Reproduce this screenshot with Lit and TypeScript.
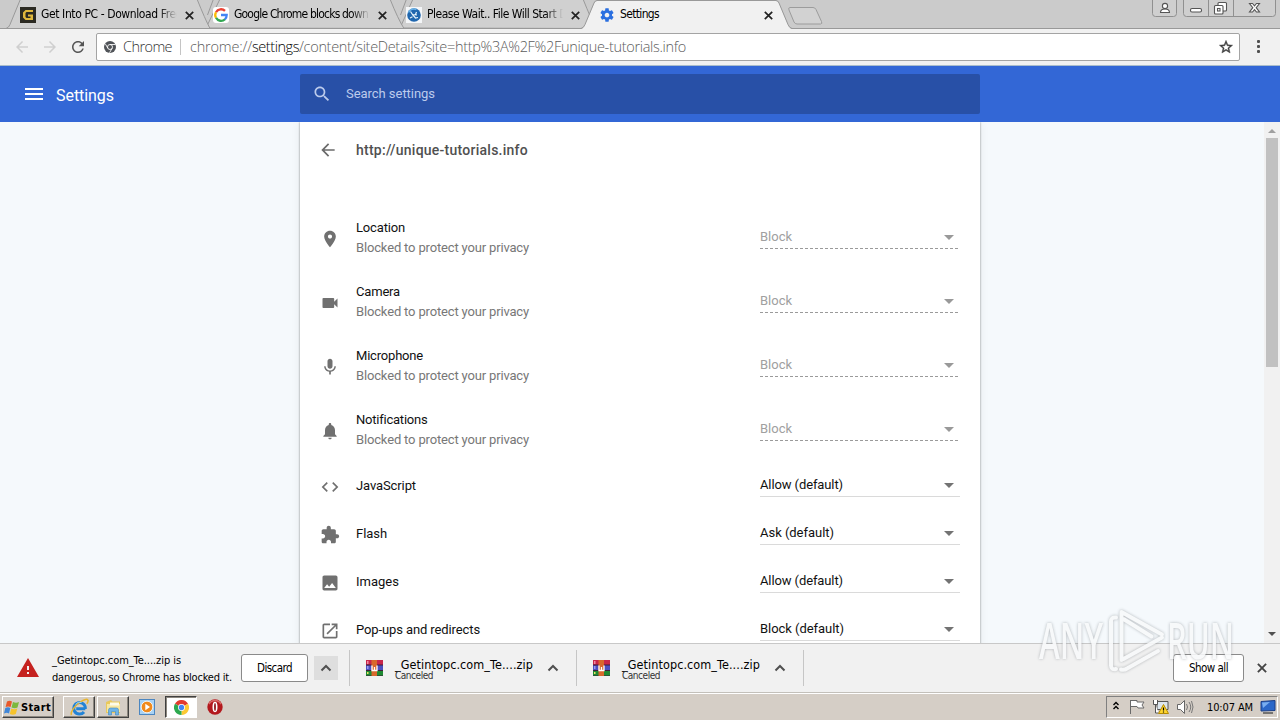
import { LitElement, html, svg, css, nothing } from "lit";
import { customElement, property } from "lit/decorators.js";

/* Single-line label whose tracking is adjusted so that it occupies a given width. */
@customElement("fit-text")
class FitText extends LitElement {
  @property({ type: Number }) w = 0;
  static styles = css`
    :host { display: inline-block; white-space: pre; flex: none; }
  `;
  render() {
    return html`<slot></slot>`;
  }
  firstUpdated() {
    const n = (this.textContent || "").length;
    const natural = this.getBoundingClientRect().width;
    if (this.w && n > 1) this.style.letterSpacing = `${(this.w - natural) / n}px`;
  }
}

const ICONS: Record<string, string> = {
  location: "M12 2C8.13 2 5 5.13 5 9c0 5.25 7 13 7 13s7-7.75 7-13c0-3.87-3.13-7-7-7zm0 9.5c-1.38 0-2.5-1.12-2.5-2.5s1.12-2.5 2.5-2.5 2.5 1.12 2.5 2.5-1.12 2.5-2.5 2.5z",
  camera: "M17 10.5V7c0-.55-.45-1-1-1H4c-.55 0-1 .45-1 1v10c0 .55.45 1 1 1h12c.55 0 1-.45 1-1v-3.500l4 4v-11l-4 4z",
  mic: "M12 14c1.660 0 2.990-1.340 2.990-3L15 5c0-1.660-1.340-3-3-3S9 3.340 9 5v6c0 1.660 1.340 3 3 3zm5.300-3c0 3-2.540 5.100-5.300 5.100S6.700 14 6.700 11H5c0 3.410 2.720 6.230 6 6.720V21h2v-3.280c3.280-.48 6-3.300 6-6.720h-1.700z",
  bell: "M12 22c1.100 0 2-.9 2-2h-4c0 1.100.89 2 2 2zm6-6v-5c0-3.070-1.640-5.640-4.500-6.320V4c0-.83-.67-1.500-1.500-1.500s-1.500.67-1.500 1.500v.68C7.630 5.360 6 7.920 6 11v5l-2 2v1h16v-1l-2-2z",
  code: "M9.400 16.600L4.800 12l4.600-4.600L8 6l-6 6 6 6 1.400-1.400zm5.200 0l4.600-4.600-4.600-4.600L16 6l6 6-6 6-1.400-1.400z",
  puzzle: "M20.500 11H19V7c0-1.100-.9-2-2-2h-4V3.500C13 2.120 11.880 1 10.500 1S8 2.120 8 3.500V5H4c-1.100 0-1.990.9-1.990 2v3.800H3.500c1.490 0 2.700 1.210 2.700 2.700s-1.210 2.700-2.700 2.700H2V20c0 1.100.9 2 2 2h3.800v-1.500c0-1.490 1.210-2.700 2.700-2.700 1.490 0 2.700 1.210 2.700 2.700V22H17c1.100 0 2-.9 2-2v-4h1.500c1.380 0 2.500-1.120 2.500-2.500S21.880 11 20.500 11z",
  image: "M21 19V5c0-1.100-.9-2-2-2H5c-1.100 0-2 .9-2 2v14c0 1.100.9 2 2 2h14c1.100 0 2-.9 2-2zM8.500 13.500l2.500 3.010L14.500 12l4.500 6H5l3.500-4.500z",
  popup: "M19 19H5V5h7V3H5c-1.110 0-2 .9-2 2v14c0 1.100.89 2 2 2h14c1.100 0 2-.9 2-2v-7h-2v7zM14 3v2h3.590l-9.830 9.830 1.410 1.410L19 6.410V10h2V3h-7z",
  back: "M20 11H7.830l5.590-5.590L12 4l-8 8 8 8 1.410-1.410L7.830 13H20v-2z",
  search: "M15.500 14h-.79l-.28-.27C15.410 12.590 16 11.110 16 9.500 16 5.910 13.090 3 9.500 3S3 5.910 3 9.500 5.910 16 9.500 16c1.610 0 3.090-.59 4.230-1.570l.27.28v.79l5 4.990L20.490 19l-4.990-5zm-6 0C7.010 14 5 11.990 5 9.500S7.010 5 9.500 5 14 7.010 14 9.500 11.990 14 9.500 14z",
  menu: "M3 18h18v-2H3v2zm0-5h18v-2H3v2zm0-7v2h18V6H3z",
  reload: "M17.650 6.350C16.200 4.900 14.210 4 12 4c-4.420 0-7.990 3.580-7.990 8s3.570 8 7.990 8c3.730 0 6.840-2.550 7.730-6h-2.080c-.82 2.330-3.040 4-5.650 4-3.310 0-6-2.690-6-6s2.690-6 6-6c1.660 0 3.140.69 4.220 1.780L13 11h7V4l-2.350 2.350z",
  star: "M22 9.240l-7.190-.62L12 2 9.190 8.630 2 9.240l5.460 4.730L5.820 21 12 17.270 18.180 21l-1.630-7.030L22 9.240zM12 15.400l-3.760 2.270 1-4.280-3.320-2.880 4.380-.38L12 6.100l1.710 4.040 4.380.38-3.320 2.880 1 4.280L12 15.400z",
  warning: "M1 21h22L12 2 1 21zm12-3h-2v-2h2v2zm0-4h-2v-4h2v4z",
  gear: "M19.430 12.980c.04-.32.07-.64.07-.98s-.03-.66-.07-.98l2.110-1.650c.19-.15.24-.42.12-.64l-2-3.460c-.12-.22-.39-.3-.61-.22l-2.490 1c-.52-.4-1.080-.73-1.690-.98l-.38-2.650C14.460 2.180 14.250 2 14 2h-4c-.25 0-.46.18-.49.42l-.38 2.650c-.61.25-1.170.59-1.690.98l-2.490-1c-.23-.09-.49 0-.61.22l-2 3.460c-.13.22-.07.49.12.64l2.110 1.650c-.04.32-.07.65-.07.98s.03.66.07.98l-2.110 1.650c-.19.15-.24.42-.12.64l2 3.460c.12.22.39.3.61.22l2.490-1c.52.4 1.080.73 1.690.98l.38 2.650c.03.24.24.42.49.42h4c.25 0 .46-.18.49-.42l.38-2.650c.61-.25 1.170-.59 1.690-.98l2.490 1c.23.09.49 0 .61-.22l2-3.460c.12-.22.07-.49-.12-.64l-2.110-1.650zM12 15.500c-1.930 0-3.500-1.570-3.500-3.500s1.570-3.500 3.500-3.500 3.500 1.570 3.500 3.500-1.570 3.500-3.500 3.500z",
};

const icon = (name: string, size = 20, cls = "") =>
  html`<svg class="ic ${cls}" width=${size} height=${size} viewBox="0 0 24 24"><path d=${ICONS[name]} fill="currentColor" /></svg>`;

const chevronUp = html`<svg class="ic" width="12" height="8" viewBox="0 0 12 8"><path d="M1.500 6.500 6 2l4.500 4.500" fill="none" stroke="#505050" stroke-width="2" /></svg>`;
const cross = (size = 9, color = "#222") =>
  html`<svg class="ic" width=${size} height=${size} viewBox="0 0 9 9"><path d="M.8.8l7.400 7.400M8.200.8L.8 8.200" stroke=${color} stroke-width="1.700" /></svg>`;

const chromeBall = (size: number) => html`<svg class="ic" width=${size} height=${size} viewBox="0 0 48 48">
  <path d="M24 24 3.200 12A24 24 0 0 1 44.800 12z" fill="#e33b2e" />
  <path d="M24 24 44.800 12A24 24 0 0 1 24 48z" fill="#fcc934" />
  <path d="M24 24 24 48A24 24 0 0 1 3.200 12z" fill="#2da94f" />
  <circle cx="24" cy="24" r="11" fill="#fff" /><circle cx="24" cy="24" r="8.500" fill="#4285f4" />
</svg>`;

const chromeMono = html`<svg class="ic" width="12" height="12" viewBox="0 0 48 48">
  <circle cx="24" cy="24" r="24" fill="#505358" />
  <circle cx="24" cy="24" r="10" fill="none" stroke="#fff" stroke-width="3.500" />
  <path d="M24 14h22M15.500 29 5 11M32.500 29 22 47" stroke="#fff" stroke-width="3.500" />
</svg>`;

const favG = html`<svg class="ic" width="16" height="16" viewBox="0 0 16 16">
  <rect width="16" height="16" fill="#2b2a22" />
  <path d="M13 5V3H5.500L3 5.500v5L5.500 13H13V7.500H8v2h2.500V11H6.500L5.500 10V6l1-1z" fill="#e0b83c" />
</svg>`;

const favGoogle = html`<svg class="ic" width="16" height="16" viewBox="0 0 16 16">
  <rect width="16" height="16" rx="3" fill="#fff" />
  <g fill="none" stroke-width="2.300">
    <path d="M3 5.200A5.700 5.700 0 0 1 12 3.900" stroke="#ea4335" />
    <path d="M3 10.800A5.700 5.700 0 0 1 3 5.200" stroke="#fbbc05" />
    <path d="M12 12.200A5.700 5.700 0 0 1 3 10.800" stroke="#34a853" />
    <path d="M8 8h5.700a5.700 5.700 0 0 1-1.900 4.300" stroke="#4285f4" />
  </g>
</svg>`;

const favBlue = html`<svg class="ic" width="16" height="16" viewBox="0 0 16 16">
  <rect width="16" height="16" fill="#f4f6f8" />
  <circle cx="8" cy="8" r="6.800" fill="#1f66ae" />
  <path d="M2.500 5.500a6 6 0 0 1 8-3" stroke="#6bb2e6" stroke-width="1.500" fill="none" />
  <path d="M4.500 4.500l2 3 4.500.5M6.500 7.500l3 3.500 2.500-.5M4 11l2.500-1.200M10.500 5l-1 2.500" stroke="#e8f4fc" stroke-width="1.200" fill="none" />
</svg>`;

const rarIcon = html`<svg class="ic" width="17" height="16" viewBox="0 0 17 16">
  <rect width="17" height="16" fill="#3c1f3a" />
  <rect y="0" width="17" height="4.500" fill="#c8264a" /><rect y="5.500" width="17" height="4.500" fill="#4b4fc0" /><rect y="11" width="17" height="4.500" fill="#1f8a32" />
  <rect x="1" y="1" width="1.500" height="3" fill="#f08aa0" /><rect x="1" y="6" width="1.500" height="3" fill="#9a9cf0" /><rect x="1" y="12" width="1.500" height="2" fill="#e8e060" />
  <rect x="5.500" width="5.500" height="16" fill="#d8682c" />
  <path d="M6 5.500v5h5v-5M8.500 7v3.500" stroke="#fff" stroke-width="1.300" fill="none" />
</svg>`;

const winFlag = html`<svg class="ic" width="16" height="15" viewBox="0 0 16 15">
  <path d="M3 1.500C5 .3 6.500.6 8 1.500L6.600 7C5 6.200 3.500 6.200 1.600 7z" fill="#e8582a" />
  <path d="M9 2c2 1 4 1 6 0l-1.500 5.500c-2 1-4 .8-6 0z" fill="#7cb83c" />
  <path d="M1.300 8c2-1 3.600-.8 5 0L5 13.500C3.500 12.600 2 12.600 0 13.500z" fill="#3f86d8" />
  <path d="M7.300 8.500c2 .9 4 .9 6 0L11.800 14c-2 1-4 .8-6 0z" fill="#f6c32c" />
</svg>`;

const ieIcon = html`<svg class="ic" width="19" height="18" viewBox="0 0 19 18">
  <path d="M15.300 10.800H6.200M15.300 10.800A5.800 5.800 0 1 0 14 14" fill="none" stroke="#2383d6" stroke-width="3" />
  <path d="M1.500 17c-1.500-2.500 3-9 8-12.500S17.800.5 18 2.500c.2 1-.6 2.400-1.200 3.200" fill="none" stroke="#e8b530" stroke-width="1.500" />
  <path d="M5.500 6.500a5 5 0 0 1 6-2" stroke="#8fd0f8" stroke-width="1" fill="none" />
</svg>`;

const folderIcon = html`<svg class="ic" width="17" height="17" viewBox="0 0 17 17">
  <path d="M1 3l5-2 1.500 1.500H15V14H1z" fill="#e9c95c" />
  <path d="M2 5h13v8H2z" fill="#f7e7a2" /><path d="M5 3.500h9v3H5z" fill="#fdfbe8" />
  <path d="M3.500 16v-5q0-2 2-2h6q2 0 2 2v5h-3v-3.500h-4V16z" fill="#6db4e8" stroke="#3f86bd" stroke-width=".6" />
</svg>`;

const mediaIcon = html`<svg class="ic" width="16" height="16" viewBox="0 0 16 16">
  <rect x=".5" y=".5" width="15" height="15" fill="#a8d2f4" stroke="#4c86c0" />
  <circle cx="8" cy="8" r="5.800" fill="#f08a1c" stroke="#fff" stroke-width=".8" /><path d="M6.300 4.800v6.400L11 8z" fill="#fff" />
</svg>`;

const operaIcon = html`<svg class="ic" width="16" height="16" viewBox="0 0 16 16">
  <circle cx="8" cy="8" r="7.700" fill="#b3181d" /><path d="M2 5a7 7 0 0 1 12 0" stroke="#d86a68" stroke-width="1.500" fill="none" />
  <ellipse cx="8" cy="8" rx="2.500" ry="5.200" fill="#fff" /><ellipse cx="8" cy="8" rx=".9" ry="3.900" fill="#8c1418" />
</svg>`;

const TABS = [
  { icon: favG, text: "Get Into PC - Download Free", w: 141 },
  { icon: favGoogle, text: "Google Chrome blocks down", w: 134 },
  { icon: favBlue, text: "Please Wait.. File Will Start D", w: 140 },
];

const ROWS = [
  { icon: "location", name: "Location", w: 49, blocked: true, value: "Block", vw: 32 },
  { icon: "camera", name: "Camera", w: 44, blocked: true, value: "Block", vw: 32 },
  { icon: "mic", name: "Microphone", w: 67, blocked: true, value: "Block", vw: 32 },
  { icon: "bell", name: "Notifications", w: 71, blocked: true, value: "Block", vw: 32 },
  { icon: "code", name: "JavaScript", w: 60, blocked: false, value: "Allow (default)", vw: 83 },
  { icon: "puzzle", name: "Flash", w: 31, blocked: false, value: "Ask (default)", vw: 74 },
  { icon: "image", name: "Images", w: 43, blocked: false, value: "Allow (default)", vw: 83 },
  { icon: "popup", name: "Pop-ups and redirects", w: 124, blocked: false, value: "Block (default)", vw: 84 },
];

@customElement("app-root")
class AppRoot extends LitElement {
  static styles = css`
    :host {
      display: block; position: relative; width: 1280px; height: 720px; overflow: hidden;
      font-family: "DejaVu Sans Condensed", "DejaVu Sans", sans-serif; font-size: 11px; color: #000;
    }
    * { box-sizing: border-box; }
    .ic { display: block; flex: none; }
    .screen { display: flex; flex-direction: column; height: 720px; }

    .strip { position: relative; height: 29px; flex: none; background: #cbcbcb; }
    .outline { position: absolute; inset: 0; }
    .tabs { position: relative; display: flex; height: 29px; padding-left: 20px; }
    .tab { display: flex; align-items: center; width: 193px; height: 29px; }
    .label { width: 136px; margin-left: 5px; overflow: hidden; font-size: 12px; line-height: 16px; margin-top: -1px; }
    .fade { -webkit-mask-image: linear-gradient(90deg, #000 118px, transparent 136px); }
    .gear { color: #2a6fe0; }
    .tab .close { margin-left: 8px; padding-top: 1px; }
    .controls { position: absolute; right: 0; top: 0; }

    .toolbar { display: flex; align-items: center; height: 37px; flex: none; background: #f1f1f1; border-bottom: 1px solid #a9bdcc; padding: 0 0 1px 13px; }
    .nav { color: #cfcfcf; margin-right: 10px; }
    .fwd { transform: scaleX(-1); }
    .reload { color: #555; margin-right: 9px; }
    .omni { display: flex; align-items: center; width: 1144px; height: 28px; background: #fff; border: 1px solid #a4a4a4; border-radius: 2px; padding: 0 5px 0 7px; font: 300 14.500px/20px "Open Sans", sans-serif; color: #5c5c5c; }
    .chip { margin-left: 7px; color: #333; }
    .sep { width: 1px; height: 16px; background: #c4c4c4; margin: 0 9px 0 8px; }
    .url { flex: 1; display: flex; }
    .dark { color: #000; }
    .star { color: #3c3c3c; stroke: #3c3c3c; stroke-width: .6px; }
    .dots { display: flex; flex-direction: column; gap: 2px; margin-left: 17px; }
    .dot { width: 3px; height: 3px; background: #505050; border-radius: 1px; }

    .header { display: flex; align-items: center; height: 56px; flex: none; background: #3367d6; color: #fff; padding-left: 22px; }
    .title { font: 400 16px/20px Roboto, sans-serif; margin-left: 10px; width: 244px; padding-top: 3px; }
    .search { display: flex; align-items: center; width: 680px; height: 40px; background: #2850a7; border-radius: 2px; padding-left: 12px; color: #bccbec; font: 400 13px/18px Roboto, sans-serif; }
    .search fit-text { margin-left: 14px; }

    .content { display: flex; height: 521px; flex: none; background: #f5f9fc; overflow: hidden; padding-left: 300px; }
    .panel { width: 680px; height: 700px; background: #fff; font: 400 13px/20px Roboto, sans-serif; box-shadow: 0 0 2px rgba(0,0,0,.45), 0 1px 10px rgba(0,0,0,.07); flex: none; }
    .site { display: flex; align-items: center; height: 84px; padding: 0 20px 28px 18px; font-weight: 500; font-size: 14px; color: #505050; }
    .site .ic { color: #6b6b6b; margin-right: 18px; }
    .row { display: flex; align-items: center; height: 48px; padding: 0 20px; color: #111; }
    .tall { height: 64px; }
    .row .ic.lead { color: #707070; margin: 2px 16px 0 0; }
    .names { flex: 1; display: flex; flex-direction: column; align-items: flex-start; }
    .sub { color: #777; }
    .select { display: flex; align-items: center; justify-content: space-between; width: 200px; height: 23px; border-bottom: 1px solid #dadada; padding-right: 6px; color: #111; margin-top: -1px; }
    .off { border-bottom: 0; padding-bottom: 1px; color: #a0a0a0; background: repeating-linear-gradient(90deg, #9a9a9a 0 3px, transparent 3px 5px) 0 100% / 100% 1px no-repeat; }
    .arrow { width: 10px; height: 5px; background: #737373; clip-path: polygon(0 0, 100% 0, 50% 100%); margin-top: 1px; }
    .off .arrow { background: #999; }

    .scroll { display: flex; flex-direction: column; align-items: center; margin-left: auto; width: 16px; height: 521px; background: #f1f1f1; }
    .up { width: 8px; height: 4px; margin-top: 7px; background: #a0a0a0; clip-path: polygon(50% 0, 100% 100%, 0 100%); }
    .thumb { width: 12px; height: 229px; margin-top: 5px; background: #c1c1c1; }
    .down { width: 8px; height: 4px; margin: auto 0 7px; background: #505050; clip-path: polygon(0 0, 100% 0, 50% 100%); }

    .shelf { display: flex; align-items: center; height: 50px; flex: none; background: #f1f1f1; border-top: 1px solid #c8c8c8; border-bottom: 1px solid #c3c0ba; padding: 0 13px 0 16px; }
    .danger { color: #c5221f; }
    .msg { display: flex; flex-direction: column; align-items: flex-start; margin-left: 12px; width: 189px; font-size: 11px; line-height: 17px; padding-top: 1px; }
    .btn { display: flex; align-items: center; justify-content: center; height: 28px; background: #fff; border: 1px solid #8a8a8a; border-radius: 3px; font-size: 11.500px; line-height: 16px; padding-bottom: 1px; }
    .discard { width: 67px; }
    .drop { display: flex; align-items: center; justify-content: center; width: 24px; height: 24px; background: #dedede; margin: 0 11px 0 6px; }
    .bar { width: 1px; height: 36px; background: #c6c6c6; }
    .item { display: flex; align-items: center; width: 226px; padding-left: 16px; }
    .item .ic { margin-top: -1px; }
    .file { display: flex; flex-direction: column; align-items: flex-start; width: 138px; margin: 0 14px 0 12px; font-size: 12.500px; line-height: 14px; padding-top: 2px; }
    .state { font-size: 10px; line-height: 9px; color: #333; margin-top: -1px; }
    .all { width: 71px; margin-left: auto; margin-right: 13px; }

    .taskbar { display: flex; align-items: center; height: 27px; flex: none; background: #d5cec6; border-top: 1px solid #fff; padding: 0 2px; }
    .b { display: flex; align-items: center; justify-content: center; height: 22px; border: 1px solid; border-color: #fff #404040 #404040 #fff; box-shadow: inset -1px -1px #8c877f; }
    .start { width: 52px; justify-content: flex-start; padding-left: 1px; font-weight: 700; margin-right: 9px; }
    .start fit-text { margin-left: 1px; }
    .app { width: 32px; margin-right: 2px; }
    .active { background: #fff; border-color: #404040 #fff #fff #404040; box-shadow: inset 1px 1px #8c877f; margin: 0 10px 0 10px; }
    .media { margin-left: 8px; }
    .tray { display: flex; align-items: center; width: 172px; height: 22px; margin-left: auto; border: 1px solid; border-color: #808080 #fff #fff #808080; padding-left: 5px; }
    .clock { margin-left: 5px; }

    .mark { position: absolute; left: 1030px; top: 600px; opacity: .9; filter: drop-shadow(0 0 1.500px rgba(110,115,120,.55)); }
    .word { font: 600 50px "Open Sans", sans-serif; }
  `;

  outline() {
    return svg`
      <g stroke="#999" fill="#d0d0d0">
        <path d="M400 28 413 -1H583q8 20 13 29.500z" />
        <path d="M206 28 220 -1H390q8 20 14 29.500z" />
        <path d="M6 28.500q3-1 4-4L20.500-1H197q8 20 13 29.500z" />
      </g>
      <path d="M213.500-1 207.500 15M406.500-1 400.500 15" stroke="#999" fill="none" />
      <path d="M0 28.500H1280" stroke="#999" />
      <path d="M581 29q3-1 4-4L594 3.500Q595 1 597 1H776q2 0 3 2.500L788 25q1 3 4 4z" fill="#f1f1f1" />
      <path d="M581 28.500q3-1 4-4L594 3Q595 .5 597 .5H776q2 0 3 2.500L788 24.500q1 3 4 4" fill="none" stroke="#999" />
      <path d="M790 7.500h23q2 0 3 2l5.500 12q1 2.500-1 2.500H797q-2 0-3-2l-5-12q-1-2.500 1-2.500z" fill="#d2d2d2" stroke="#9c9c9c" />`;
  }

  controls() {
    return html`<svg class="controls" width="130" height="20" viewBox="1150 0 130 20">
      <g fill="#cfcfcf" stroke="#909090">
        <path d="M1152.500-2V13.500q0 3 3 3h18q3 0 3-3V-2z" />
        <path d="M1183.500-2V13.500q0 3 3 3h86q3 0 3-3V-2z" />
        <path d="M1208.500 0V16M1233.500 0V16" />
      </g>
      <g fill="#fff" stroke="#555" stroke-width="1.100">
        <path d="M1160.500 12.500q0-3.500 4.500-3.500t4.500 3.500z" /><circle cx="1165" cy="6" r="2.600" />
        <rect x="1190.500" y="8.500" width="11" height="3.500" rx="1.500" />
        <rect x="1218" y="2.500" width="8.500" height="8.500" rx="1" /><rect x="1214.500" y="5.500" width="8.500" height="8.500" rx="1" /><rect x="1217.500" y="8.500" width="2.500" height="2.500" />
        <path d="M1249.500 3.500h3l2 2.300 2-2.300h3l-3.300 4.200 3.300 4.300h-3l-2-2.300-2 2.300h-3l3.300-4.300z" />
      </g>
    </svg>`;
  }

  row(r: (typeof ROWS)[number]) {
    return html`<div class="row ${r.blocked ? "tall" : ""}">
      ${icon(r.icon, 20, "lead")}
      <div class="names">
        <fit-text .w=${r.w}>${r.name}</fit-text>
        ${r.blocked ? html`<fit-text class="sub" .w=${173}>Blocked to protect your privacy</fit-text>` : nothing}
      </div>
      <div class="select ${r.blocked ? "off" : ""}"><fit-text .w=${r.vw}>${r.value}</fit-text><span class="arrow"></span></div>
    </div>`;
  }

  item() {
    return html`<div class="item">
        ${rarIcon}
        <div class="file"><fit-text .w=${138}>_Getintopc.com_Te....zip</fit-text><fit-text class="state" .w=${38}>Canceled</fit-text></div>
        ${chevronUp}
      </div>
      <div class="bar"></div>`;
  }

  render() {
    return html`<div class="screen">
      <div class="strip">
        <svg class="outline" width="1280" height="29" viewBox="0 0 1280 29">${this.outline()}</svg>
        <div class="tabs">
          ${TABS.map((t) => html`<div class="tab">${t.icon}<div class="label fade"><fit-text .w=${t.w}>${t.text}</fit-text></div><span class="close">${cross()}</span></div>`)}
          <div class="tab">${icon("gear", 16, "gear")}<div class="label"><fit-text .w=${39}>Settings</fit-text></div><span class="close">${cross()}</span></div>
        </div>
        ${this.controls()}
      </div>
      <div class="toolbar">
        ${icon("back", 18, "nav")}${icon("back", 18, "nav fwd")}${icon("reload", 18, "reload")}
        <div class="omni">
          ${chromeMono}<fit-text class="chip" .w=${49}>Chrome</fit-text><span class="sep"></span>
          <div class="url"><fit-text .w=${62}>chrome://</fit-text><fit-text class="dark" .w=${47}>settings</fit-text><fit-text .w=${387}>/content/siteDetails?site=http%3A%2F%2Funique-tutorials.info</fit-text></div>
          ${icon("star", 16, "star")}
        </div>
        <div class="dots"><span class="dot"></span><span class="dot"></span><span class="dot"></span></div>
      </div>
      <div class="header">
        ${icon("menu", 24)}
        <div class="title"><fit-text .w=${58}>Settings</fit-text></div>
        <div class="search">${icon("search", 20)}<fit-text .w=${89}>Search settings</fit-text></div>
      </div>
      <div class="content">
        <div class="panel">
          <div class="site">${icon("back", 20)}<fit-text .w=${172}>http://unique-tutorials.info</fit-text></div>
          ${ROWS.map((r) => this.row(r))}
        </div>
        <div class="scroll"><span class="up"></span><span class="thumb"></span><span class="down"></span></div>
      </div>
      <div class="shelf">
        ${icon("warning", 24, "danger")}
        <div class="msg"><fit-text .w=${129}>_Getintopc.com_Te....zip is</fit-text><fit-text .w=${180}>dangerous, so Chrome has blocked it.</fit-text></div>
        <div class="btn discard"><fit-text .w=${35}>Discard</fit-text></div>
        <div class="drop">${chevronUp}</div>
        <div class="bar"></div>
        ${this.item()}${this.item()}
        <div class="btn all"><fit-text .w=${39}>Show all</fit-text></div>
        ${cross(10, "#444")}
      </div>
      <div class="taskbar">
        <div class="b start">${winFlag}<fit-text .w=${30}>Start</fit-text></div>
        <div class="b app">${ieIcon}</div>
        <div class="b app">${folderIcon}</div>
        <span class="media">${mediaIcon}</span>
        <div class="b app active">${chromeBall(15)}</div>
        ${operaIcon}
        <div class="tray">
          <svg class="ic" width="90" height="20" viewBox="1112 697 90 20">
            <path d="M1113.500 705l2.500-2.500 2.500 2.500M1113.500 709l2.500-2.500 2.500 2.500" fill="none" stroke="#000" stroke-width="1.400" />
            <path d="M1130.500 700v14M1131 700.500h6v1.500h7l-2 3 2 3h-6l-1-1.500h-6" fill="#fff" stroke="#6a6a6a" />
            <path d="M1157 701.500h11v8h-11z" fill="#dde6ee" stroke="#555" /><path d="M1153.500 700v4.500h4V700M1155.500 704.500V713h3" fill="#fff" stroke="#555" />
            <path d="M1163.500 704.500 1168.500 713.500h-10z" fill="#ffd62e" stroke="#b58a00" /><path d="M1163.500 707.500v3M1163.500 711.500v1" stroke="#000" stroke-width="1.200" />
            <path d="M1177.500 704.500h3l4-4v13l-4-4h-3z" fill="#fff" stroke="#666" /><path d="M1186.500 704q2 3 0 6M1189 702q3.500 5 0 10M1191.500 701q3 6 0 12" fill="none" stroke="#777" />
          </svg>
          <fit-text class="clock" .w=${46}>10:07 AM</fit-text>
          <svg class="ic" width="23" height="16" viewBox="0 0 23 16"><path d="M8 2.500l14-1v10L8 12z" fill="#2b67c8" stroke="#1c3f86" /><path d="M9 3.500l8-.5-7 6z" fill="#79aef0" /><path d="M10 14h10" stroke="#555" stroke-width="1.500" /></svg>
        </div>
      </div>
      <svg class="mark" width="210" height="80" viewBox="1030 600 210 80">
        <g fill="#f8f9fa">
          <text class="word" x="1039" y="659" textLength="64" lengthAdjust="spacingAndGlyphs">ANY</text>
          <text class="word" x="1167" y="659" textLength="67" lengthAdjust="spacingAndGlyphs">RUN</text>
        </g>
        <path d="M1121.500 660V612L1162 634.500M1123.500 619l28 17.500M1123.500 659 1162 637.500M1116 617.500q-5-.500-5 4v44q0 4.500 5 3.500M1121 669.500q3 1 6-1l31-17.500" fill="none" stroke="#f8f9fa" stroke-width="4" stroke-linejoin="round" stroke-linecap="round" />
      </svg>
    </div>`;
  }
}
